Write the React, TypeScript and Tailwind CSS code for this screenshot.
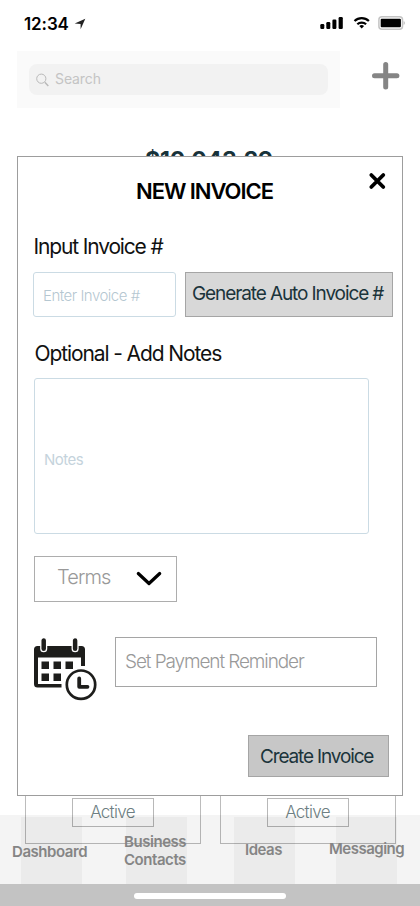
import React from "react";

function StatusBar() {
  return (
    <div className="flex h-[51px] items-start justify-between pl-[24px] pr-[15px]">
      <div className="flex items-center pt-[12px]">
        <span className="w-[46px] whitespace-nowrap text-[17px] font-semibold leading-[24px] tracking-[-0.1px] text-black">12:34</span>
        <svg className="ml-[4px] mt-[-1px]" width="12" height="12" viewBox="0 0 12 12">
          <path d="M11.3.7 6.6 11.2V5.9L.7 5.4Z" fill="#222" />
        </svg>
      </div>
      <svg className="mt-[14px]" width="86" height="18" viewBox="0 0 86 18">
        <rect x="1.300" y="10" width="4" height="5" rx="1.2" />
        <rect x="7.300" y="8" width="4" height="7" rx="1.2" />
        <rect x="13.400" y="5.5" width="4" height="9.5" rx="1.2" />
        <rect x="19.600" y="3" width="4.2" height="12" rx="1.2" />
        <g fill="none" stroke="#000" strokeWidth="2.200">
          <path d="M35.500 7a10.5 10.5 0 0 1 14.4 0" />
          <path d="M38.300 10.300a6.4 6.4 0 0 1 8.8 0" />
        </g>
        <path d="M40.300 12a3.6 3.6 0 0 1 4.8 0l-2.4 2.5Z" />
        <rect x="59.900" y="2.8" width="23.600" height="12.4" rx="3" fill="#fff" stroke="#c4c4c4" strokeWidth="1.5" />
        <rect x="61.700" y="4.7" width="20.2" height="8.6" rx="1" />
        <path d="M84.600 7v4q1.3-.7 1.3-2t-1.3-2Z" fill="#bdbdbd" />
      </svg>
    </div>
  );
}

function SearchRow() {
  return (
    <div className="flex h-[57px] pl-[17px]">
      <div className="w-[323px] bg-[#fafafa] pl-[12px] pt-[13px]">
        <div className="flex h-[31px] w-[299px] items-center rounded-[8px] bg-[#f2f2f2] pl-[7px]">
          <svg width="13" height="14" viewBox="0 0 13 14" fill="none" stroke="#b9b9b9" strokeWidth="1">
            <circle cx="5.3" cy="5.7" r="4.6" />
            <path d="m8.8 9.2 3.5 3.8" strokeWidth="1.4" />
          </svg>
          <span className="ml-[6px] mt-[-2px] whitespace-nowrap text-[14px] tracking-[-0.1px] text-[#c4c4c4]">Search</span>
        </div>
      </div>
      <svg className="ml-[32px] mt-[11px]" width="28" height="28" viewBox="0 0 28 28" stroke="#858585" strokeWidth="5" strokeLinecap="round">
        <path d="M2.5 13.8h22.4M13.7 2.6V25" />
      </svg>
    </div>
  );
}

function InvoiceCard() {
  return (
    <div className="flex h-[78px] w-[176px] items-end border border-[#bcbcbc] pb-[16px] pl-[46px]">
      <div className="flex h-[29px] w-[82px] items-center justify-center border border-[#b8b8b8] text-[17px] font-light tracking-[-0.7px] text-[#6e7f83]">
        <span>Active</span>
      </div>
    </div>
  );
}

function BottomNav() {
  return (
    <div className="absolute inset-x-0 bottom-0">
      <nav className="flex h-[69px] bg-black/[0.045] text-[15px] font-semibold leading-[18px] text-[#858585]">
        <div className="ml-[21px] mt-[2px] w-[61px] bg-black/[0.035] pt-[26px]">
          <span className="ml-[-9px] block whitespace-nowrap tracking-[-0.45px]">Dashboard</span>
        </div>
        <div className="ml-[44px] mt-[2px] w-[61px] bg-black/[0.035] pt-[16px] tracking-[-0.45px]">
          <span className="ml-[-2px] block whitespace-nowrap">Business</span>
          <span className="ml-[-2px] block whitespace-nowrap">Contacts</span>
        </div>
        <div className="ml-[47px] mt-[2px] w-[61px] bg-black/[0.035] pt-[24px]">
          <span className="ml-[11px] block tracking-[-0.5px]">Ideas</span>
        </div>
        <div className="ml-[41px] mt-[2px] w-[61px] bg-black/[0.035] pt-[23px]">
          <span className="ml-[-7px] block whitespace-nowrap tracking-[-0.5px]">Messaging</span>
        </div>
      </nav>
      <div className="flex h-[22px] justify-center bg-[#c3c3c3] pt-[9px]">
        <div className="h-[6px] w-[152px] rounded-full bg-white" />
      </div>
    </div>
  );
}

function CalendarClock() {
  return (
    <svg width="64" height="63" viewBox="0 0 64 63" fill="#1d1d1b">
      <path d="M3.500 8H47.500Q51 8 51 11.500V28H47V19.500H4V46H27.500V49.500H3.500Q0 49.500 0 46V11.500Q0 8 3.500 8Z" />
      <g stroke="#fff" strokeWidth="1.3">
        <rect x="6.800" y="-0.400" width="5.800" height="14" rx="2.900" />
        <rect x="38.200" y="-0.400" width="5.800" height="14" rx="2.900" />
      </g>
      <path d="M7.500 23.500H15V31H7.500ZM19.500 23.500H27V31H19.500ZM31.500 23.500H39V31H31.500ZM7.500 35.500H15V43H7.500ZM19.500 35.500H27V43H19.500Z" />
      <circle cx="47" cy="46.700" r="16.400" fill="#fff" />
      <circle cx="47" cy="46.700" r="14.200" fill="none" stroke="#1d1d1b" strokeWidth="2.700" />
      <path d="M45.200 40.500v8.300h8.300" fill="none" stroke="#1d1d1b" strokeWidth="3.800" strokeLinecap="round" strokeLinejoin="round" />
    </svg>
  );
}

function InvoiceModal() {
  return (
    <section className="absolute left-[17px] top-[156px] h-[640px] w-[386px] border border-[#9d9d9d] bg-white pl-[15px]">
      <header className="flex h-[68px] items-start">
        <h1 className="ml-[103px] mt-[19px] w-[140px] whitespace-nowrap text-[22px] font-semibold leading-[30px] tracking-[-1.05px] text-black">NEW INVOICE</h1>
        <svg className="ml-[92px] mt-[15px]" width="18" height="18" viewBox="0 0 18 18" stroke="#000" strokeWidth="3.800" strokeLinecap="round">
          <path d="m3.300 3 12 12M15.300 3l-12 12" />
        </svg>
      </header>
      <h2 className="ml-[0.500px] mt-[7px] whitespace-nowrap text-[21px] leading-[30px] tracking-[-1.15px] text-[#111]">Input Invoice #</h2>
      <div className="mt-[10px] flex">
        <div className="flex h-[45px] w-[143px] items-center rounded-[3px] border border-[#cbdbe4] pl-[9px] pt-[3px]">
          <span className="whitespace-nowrap text-[15px] font-light tracking-[-0.5px] text-[#b5c7d1]">Enter Invoice #</span>
        </div>
        <button className="ml-[9px] flex h-[45px] w-[208px] items-center whitespace-nowrap border border-[#a5a5a5] bg-[#d8d8d8] pl-[6px] text-[19px] tracking-[-1.1px] text-[#1b343b]">
          <span>Generate Auto Invoice #</span>
        </button>
      </div>
      <h2 className="ml-[1.500px] mt-[22px] whitespace-nowrap text-[21px] leading-[30px] tracking-[-1.1px] text-[#111]">Optional - Add Notes</h2>
      <div className="ml-[1px] mt-[9px] flex h-[156px] w-[335px] items-center rounded-[3px] border border-[#cbdbe4] pl-[9px] pt-[9px]">
        <span className="text-[15px] tracking-[-0.5px] text-[#c5d3dc]">Notes</span>
      </div>
      <button className="ml-[1px] mt-[22px] flex h-[46px] w-[143px] items-center border border-[#adadad] pl-[22px]">
        <span className="mt-[-4px] w-[55px] text-left text-[20px] font-light tracking-[-0.9px] text-[#999]">Terms</span>
        <svg className="ml-[24px] mt-[-1px]" width="26" height="16" viewBox="0 0 26 16" fill="none" stroke="#000" strokeWidth="3.200" strokeLinecap="round" strokeLinejoin="round">
          <path d="m2.300 2.500 10.700 10 10.700-10" />
        </svg>
      </button>
      <div className="ml-[1px] mt-[36px] flex h-[63px]">
        <CalendarClock />
        <div className="ml-[17px] mt-[-1px] flex h-[50px] w-[262px] items-center border border-[#a5a5a5] pl-[9px]">
          <span className="whitespace-nowrap text-[19px] font-light tracking-[-1.1px] text-[#999]">Set Payment Reminder</span>
        </div>
      </div>
      <button className="ml-[215px] mt-[34px] flex h-[42px] w-[141px] items-center whitespace-nowrap border border-[#a5a5a5] bg-[#c7c7c7] pl-[11px] pt-[2px] text-[19px] tracking-[-1.15px] text-[#1b343b]">
        <span>Create Invoice</span>
      </button>
    </section>
  );
}

export default function App() {
  return (
    <main className="relative h-[906px] w-[420px] overflow-hidden bg-white font-['Inter','Liberation_Sans',sans-serif]">
      <StatusBar />
      <SearchRow />
      <div className="mt-[37px] h-[30px] pl-[145px] text-[23px] font-bold leading-[30px] tracking-[-0.150px] text-[#17323a]">$10,043.29</div>
      <div className="mt-[591px] flex gap-[19px] pl-[24.500px]">
        <InvoiceCard />
        <InvoiceCard />
      </div>
      <BottomNav />
      <InvoiceModal />
    </main>
  );
}
